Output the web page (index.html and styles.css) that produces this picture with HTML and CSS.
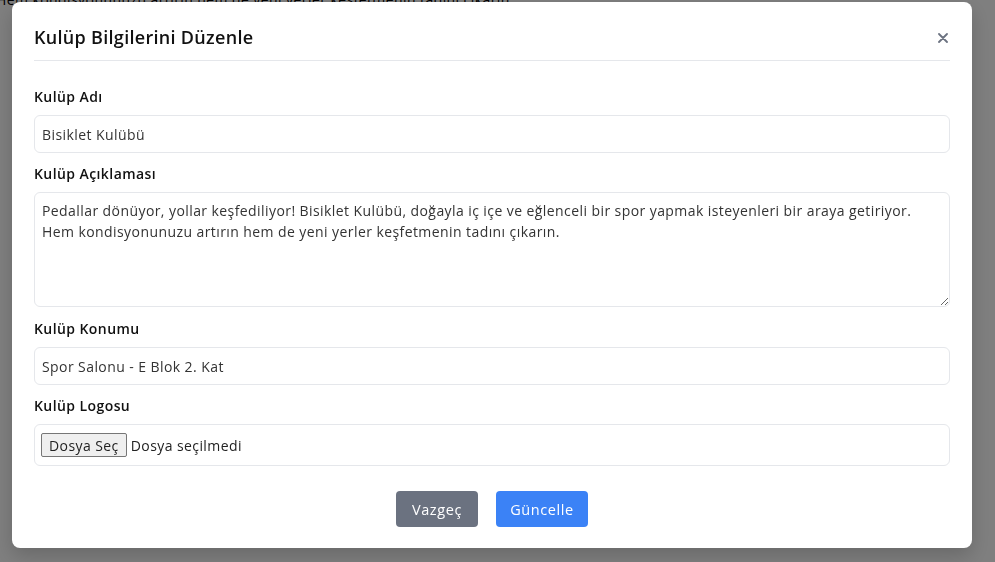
FILE: index.html
```html
<!DOCTYPE html>
<html lang="tr">
<head>
<meta charset="utf-8">
<title>Kulüp Bilgilerini Düzenle</title>
<link rel="stylesheet" href="styles.css">
</head>
<body>
<div class="page">
  <p class="page-text">Hem kondisyonunuzu artırın hem de yeni yerler keşfetmenin tadını çıkarın.</p>
</div>
<div class="backdrop">
  <div class="modal">
    <div class="modal-header">
      <h2 class="modal-title">Kulüp Bilgilerini Düzenle</h2>
      <button class="close" type="button" aria-label="Kapat">
        <svg width="10" height="10" viewBox="0 0 10 10"><path d="M1 1L9 9M9 1L1 9" stroke="#6b7280" stroke-width="1.8" stroke-linecap="round"/></svg>
      </button>
    </div>
    <form class="modal-body">
      <div class="field">
        <label class="label">Kulüp Adı</label>
        <input class="input" type="text" value="Bisiklet Kulübü">
      </div>
      <div class="field field-area">
        <label class="label">Kulüp Açıklaması</label>
        <textarea class="input textarea">Pedallar dönüyor, yollar keşfediliyor! Bisiklet Kulübü, doğayla iç içe ve eğlenceli bir spor yapmak isteyenleri bir araya getiriyor. Hem kondisyonunuzu artırın hem de yeni yerler keşfetmenin tadını çıkarın.</textarea>
      </div>
      <div class="field">
        <label class="label">Kulüp Konumu</label>
        <input class="input" type="text" value="Spor Salonu - E Blok 2. Kat">
      </div>
      <div class="field">
        <label class="label">Kulüp Logosu</label>
        <div class="input file">
          <span class="file-btn">Dosya Seç</span>
          <span class="file-name">Dosya seçilmedi</span>
        </div>
      </div>
      <div class="actions">
        <button type="button" class="btn btn-grey">Vazgeç</button>
        <button type="button" class="btn btn-blue">Güncelle</button>
      </div>
    </form>
  </div>
</div>
</body>
</html>
```

FILE: styles.css
```css
* { box-sizing: border-box; }
html, body { margin: 0; padding: 0; }
body {
  width: 995px;
  height: 562px;
  overflow: hidden;
  font-family: "Open Sans", "Liberation Sans", sans-serif;
  letter-spacing: 0.42px;
  background: #fff;
  color: #222;
}
.page { height: 562px; }
.page-text {
  margin: -8px 0 0 -4px;
  font-size: 14px;
  line-height: 16px;
  color: #000;
}
.backdrop {
  position: fixed;
  inset: 0;
  background: rgba(0, 0, 0, 0.5);
}
.modal {
  position: absolute;
  left: 12px;
  top: 2px;
  width: 960px;
  height: 546px;
  background: #fff;
  border-radius: 8px;
  padding: 0 22px;
  box-shadow: 0 8px 20px rgba(0, 0, 0, 0.18);
}
.modal-header {
  display: flex;
  align-items: center;
  justify-content: space-between;
  padding: 22px 0 9px;
  border-bottom: 1px solid #e5e7eb;
}
.modal-title {
  margin: 0;
  font-size: 18px;
  font-weight: 600;
  line-height: 27px;
  letter-spacing: 0.3px;
  color: #111;
}
.close {
  border: 0;
  background: none;
  padding: 0;
  margin-right: 2px;
  display: flex;
}
.modal-body { padding-top: 25px; }
.field { display: flex; flex-direction: column; margin-bottom: 10px; }
.field-area { margin-bottom: 11px; }
.label {
  font-size: 14px;
  font-weight: 600;
  line-height: 21px;
  color: #111;
  margin-bottom: 8px;
}
.input {
  display: block;
  width: 100%;
  height: 38px;
  border: 1px solid #e5e7eb;
  border-radius: 6px;
  padding: 7px;
  font-family: inherit;
  font-size: 14px;
  line-height: 21px;
  letter-spacing: 0.42px;
  color: #333;
  background: #fff;
  outline: none;
}
.textarea { height: 115px; resize: vertical; }
.file {
  height: 42px;
  display: flex;
  align-items: center;
  gap: 4px;
  padding: 0 6px;
}
.file-btn {
  display: inline-flex;
  align-items: center;
  height: 24px;
  padding: 0 7px;
  background: #efefef;
  border: 1px solid #767676;
  border-radius: 2px;
  color: #222;
  font-size: 14px;
}
.file-name { color: #222; }
.actions {
  display: flex;
  justify-content: center;
  gap: 18px;
  margin-top: 25px;
}
.btn {
  height: 36px;
  border: 0;
  border-radius: 4px;
  color: #fff;
  font-family: inherit;
  font-size: 14.5px;
  font-weight: 500;
  letter-spacing: 0.6px;
  padding: 0;
}
.btn-grey { background: #6b7280; width: 82px; }
.btn-blue { background: #3b82f6; width: 92px; }
```
